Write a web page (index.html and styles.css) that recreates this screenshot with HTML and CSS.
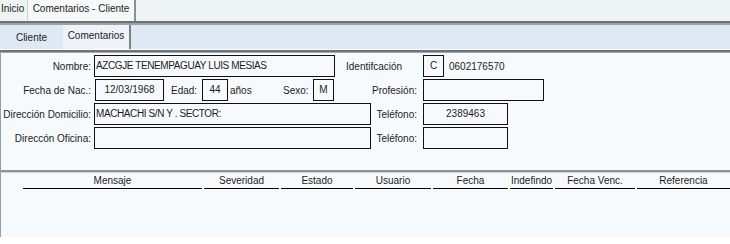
FILE: index.html
```html
<!DOCTYPE html>
<html lang="es">
<head>
<meta charset="utf-8">
<title>Comentarios - Cliente</title>
<link rel="stylesheet" href="styles.css">
</head>
<body>
<div class="topbar">
  <div class="ttab">Inicio</div>
  <div class="ttab active">Comentarios - Cliente</div>
</div>
<div class="subbar">
  <div class="stab">Cliente</div>
  <div class="stab active">Comentarios</div>
</div>
<div class="rule"></div>
<div class="content">
  <div class="form">
    <div class="row">
      <span class="lbl">Nombre:</span>
      <span class="box top w-nombre">AZCGJE TENEMPAGUAY LUIS MESIAS</span>
      <span class="txt w-ident">Identifcación</span>
      <span class="box center w-c">C</span>
      <span class="txt idnum">0602176570</span>
    </div>
    <div class="row">
      <span class="lbl lbl-fecha">Fecha de Nac.:</span>
      <span class="box center w-fecha">12/03/1968</span>
      <span class="txt w-edad">Edad:</span>
      <span class="box center w-edadbox">44</span>
      <span class="txt w-anios">años</span>
      <span class="txt w-sexo">Sexo:</span>
      <span class="box center w-c">M</span>
      <span class="rlbl w-prof">Profesión:</span>
      <span class="box w-profbox"></span>
    </div>
    <div class="row">
      <span class="lbl">Dirección Domicilio:</span>
      <span class="box top w-dir">MACHACHI S/N Y . SECTOR:</span>
      <span class="rlbl w-tel">Teléfono:</span>
      <span class="box center w-telbox">2389463</span>
    </div>
    <div class="row">
      <span class="lbl">Direccón Oficina:</span>
      <span class="box top w-dir"></span>
      <span class="rlbl w-tel">Teléfono:</span>
      <span class="box center w-telbox"></span>
    </div>
  </div>
  <div class="sep"></div>
  <div class="headers">
    <div class="col c-msg">Mensaje</div>
    <div class="col c-sev">Severidad</div>
    <div class="col c-est">Estado</div>
    <div class="col c-usr">Usuario</div>
    <div class="col c-fec">Fecha</div>
    <div class="col c-ind">Indefindo</div>
    <div class="col c-ven">Fecha Venc.</div>
    <div class="col c-ref">Referencia</div>
  </div>
</div>
</body>
</html>
```
FILE: styles.css
```css
* { box-sizing: border-box; }
html, body {
  margin: 0;
  padding: 0;
  background: #ffffff;
}
body {
  width: 730px;
  height: 244px;
  overflow: hidden;
  font-family: "Liberation Sans", Arial, sans-serif;
  font-size: 10px;
  color: #1c1c1c;
}

/* top tab strip */
.topbar {
  display: flex;
  height: 23px;
  background: #eef5f4;
  border-bottom: 2px solid #6e7273;
}
.ttab {
  line-height: 17px;
  padding: 0 3px 0 1px;
  width: 27px;
}
.ttab.active {
  width: 109px;
  padding: 0;
  text-align: center;
  background: #f5f9f9;
  border-left: 1px solid #cdd2d2;
  border-right: 2px solid #8a8f90;
}

/* second tab strip */
.subbar {
  display: flex;
  height: 27px;
  background: #dfe9f3;
  border-top: 2px solid #9da2a3;
  border-bottom: 1px solid #ffffff;
}
.stab {
  width: 63px;
  text-align: center;
  line-height: 24px;
  padding-top: 1px;
}
.stab.active {
  width: 68px;
  line-height: 22px;
  padding-top: 0;
  background: #edf3f9;
  border-right: 2px solid #7c8081;
}
.rule {
  height: 3px;
  background: linear-gradient(#6f7374 0, #6f7374 2px, #a3a8a9 2px);
}

/* content */
.content {
  height: 184px;
  background: #f7fafd;
  border-left: 1px solid #9a9fa0;
}
.form {
  padding-top: 2px;
}
.row {
  display: flex;
  align-items: center;
  height: 22px;
  margin-bottom: 2px;
}
.lbl {
  width: 90px;
  margin-right: 3px;
  text-align: right;
  white-space: nowrap;
  padding-top: 1px;
}
.lbl-fecha { margin-right: 4px; }
.txt, .rlbl {
  white-space: nowrap;
  padding-top: 1px;
}
.rlbl {
  text-align: right;
  margin-right: 6px;
}
.box {
  height: 22px;
  border: 1px solid #111;
  white-space: nowrap;
  overflow: hidden;
  line-height: 15px;
  padding: 2px 1px 0 1px;
}
.box.center { text-align: center; }
.box.top { letter-spacing: -0.4px; }

.w-nombre { width: 241px; }
.w-ident { width: 77px; margin-left: 11px; }
.w-c { width: 21px; }
.idnum { margin-left: 5px; }
.w-fecha { width: 69px; }
.w-edad { width: 31px; margin-left: 7px; }
.w-edadbox { width: 26px; }
.w-anios { width: 53px; margin-left: 2px; }
.w-sexo { width: 30px; }
.w-prof { width: 83px; }
.w-profbox { width: 121px; }
.w-dir { width: 277px; }
.w-tel { width: 46px; }
.w-telbox { width: 85px; }

/* separator + grid header */
.sep {
  margin-top: 21px;
  height: 3px;
  background: linear-gradient(#8d9192 0, #8d9192 2px, #cdd1d2 2px);
}
.headers {
  display: flex;
  gap: 2px;
  padding-left: 22px;
}
.col {
  height: 16px;
  line-height: 15px;
  text-align: center;
  border-bottom: 1px solid #000;
  white-space: nowrap;
  overflow: hidden;
}
.c-msg { width: 179px; }
.c-sev { width: 75px; }
.c-est { width: 72px; }
.c-usr { width: 76px; }
.c-fec { width: 75px; }
.c-ind { width: 43px; }
.c-ven { width: 80px; }
.c-ref { flex: 1; }
```
